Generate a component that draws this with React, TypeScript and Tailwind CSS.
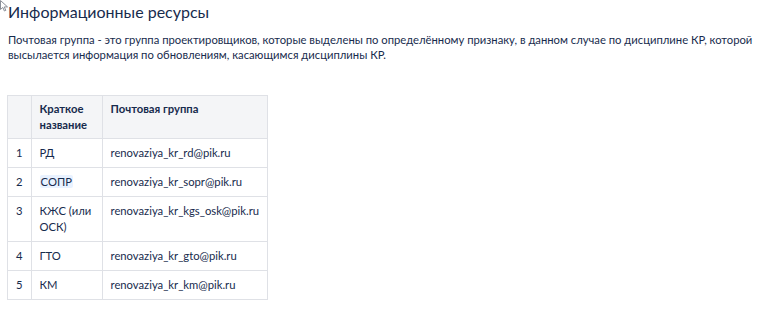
import React from 'react'

const rows = [
  { n: 1, name: ['РД'], mail: 'renovaziya_kr_rd@pik.ru' },
  { n: 2, name: ['СОПР'], mail: 'renovaziya_kr_sopr@pik.ru', mark: true },
  { n: 3, name: ['КЖС (или', 'ОСК)'], mail: 'renovaziya_kr_kgs_osk@pik.ru' },
  { n: 4, name: ['ГТО'], mail: 'renovaziya_kr_gto@pik.ru' },
  { n: 5, name: ['КМ'], mail: 'renovaziya_kr_km@pik.ru' },
]

function Pointer() {
  return (
    <svg className="absolute left-0 top-0" width="9" height="12" viewBox="0 0 9 12">
      <path d="M0.5 0.5 L0.5 9.5 L2.8 7.4 L4.4 11 L5.8 10.4 L4.3 6.9 L7.5 6.9 Z" fill="#fff" stroke="#8a8f98" strokeWidth="1" />
    </svg>
  )
}

export default function App() {
  return (
    <div className="relative h-[312px] w-[768px] bg-white text-[#172b4d]" style={{ fontFamily: 'Lato, "Noto Sans", sans-serif' }}>
      <Pointer />
      <div className="px-2 pt-[1px]">
        <h1 className="text-[16px] leading-[21px] font-normal">Информационные ресурсы</h1>
        <p className="mt-[10px] text-[11.25px] leading-[15px]">
          Почтовая группа - это группа проектировщиков, которые выделены по определённому признаку, в данном случае по дисциплине КР, которой высылается информация по обновлениям, касающимся дисциплины КР.
        </p>
        <table className="-ml-px mt-[33px] table-fixed border-collapse text-[11.25px] leading-[16px]">
          <thead>
            <tr className="bg-[#f4f5f7]">
              <th className="w-[23px] border border-[#dfe1e6] px-2 py-[5px]" />
              <th className="w-[71px] border border-[#dfe1e6] px-2 py-[5px] text-left align-top font-bold">Краткое название</th>
              <th className="w-[165px] border border-[#dfe1e6] px-2 py-[5px] text-left align-top font-bold">Почтовая группа</th>
            </tr>
          </thead>
          <tbody>
            {rows.map((r) => (
              <tr key={r.n}>
                <td className="border border-[#dfe1e6] px-2 py-[6px] align-top">
                  <div className="h-4 overflow-visible">{r.n}</div>
                </td>
                <td className="border border-[#dfe1e6] px-2 py-[6px] align-top">
                  {r.name.map((line) => (
                    <div key={line} className="h-4 overflow-visible whitespace-nowrap">
                      {r.mark ? <span className="rounded-[2px] bg-[#e9f2ff] px-px">{line}</span> : line}
                    </div>
                  ))}
                </td>
                <td className="border border-[#dfe1e6] px-2 py-[6px] align-top">
                  <div className="h-4 overflow-visible whitespace-nowrap">{r.mail}</div>
                </td>
              </tr>
            ))}
          </tbody>
        </table>
      </div>
    </div>
  )
}
